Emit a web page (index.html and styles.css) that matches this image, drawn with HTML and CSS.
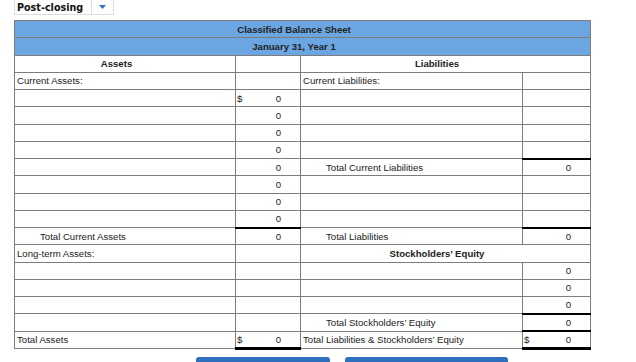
FILE: index.html
```html
<!DOCTYPE html>
<html lang="en">
<head>
<meta charset="utf-8">
<title>Classified Balance Sheet</title>
<link rel="stylesheet" href="styles.css">
</head>
<body>
<div class="page">
  <div class="select">
    <span class="select-label">Post-closing</span>
    <span class="select-arrow"><svg width="7" height="4" viewBox="0 0 7 4"><path d="M0 0H7L3.5 4Z" fill="#2b73c6"/></svg></span>
  </div>
  <table class="sheet">
    <colgroup><col class="c1"><col class="c2"><col class="c3"><col class="c4"></colgroup>
    <tr class="title"><th colspan="4">Classified Balance Sheet</th></tr>
    <tr class="title"><th colspan="4">January 31, Year 1</th></tr>
    <tr><th class="sec">Assets</th><td></td><th class="sec" colspan="2">Liabilities</th></tr>
    <tr><td class="lbl">Current Assets:</td><td class="amt"></td><td class="lbl">Current Liabilities:</td><td class="amt"></td></tr>
    <tr><td class="lbl"></td><td class="amt"><span class="dollar">$</span>0</td><td class="lbl"></td><td class="amt"></td></tr>
    <tr><td class="lbl"></td><td class="amt">0</td><td class="lbl"></td><td class="amt"></td></tr>
    <tr><td class="lbl"></td><td class="amt">0</td><td class="lbl"></td><td class="amt"></td></tr>
    <tr><td class="lbl"></td><td class="amt">0</td><td class="lbl"></td><td class="amt"></td></tr>
    <tr><td class="lbl"></td><td class="amt">0</td><td class="lbl ind">Total Current Liabilities</td><td class="amt tot">0</td></tr>
    <tr><td class="lbl"></td><td class="amt">0</td><td class="lbl"></td><td class="amt"></td></tr>
    <tr><td class="lbl"></td><td class="amt">0</td><td class="lbl"></td><td class="amt"></td></tr>
    <tr><td class="lbl"></td><td class="amt">0</td><td class="lbl"></td><td class="amt"></td></tr>
    <tr><td class="lbl ind">Total Current Assets</td><td class="amt tot">0</td><td class="lbl ind">Total Liabilities</td><td class="amt tot">0</td></tr>
    <tr><td class="lbl">Long-term Assets:</td><td class="amt"></td><th class="sec" colspan="2">Stockholders’ Equity</th></tr>
    <tr><td class="lbl"></td><td class="amt"></td><td class="lbl"></td><td class="amt">0</td></tr>
    <tr><td class="lbl"></td><td class="amt"></td><td class="lbl"></td><td class="amt">0</td></tr>
    <tr><td class="lbl"></td><td class="amt"></td><td class="lbl"></td><td class="amt">0</td></tr>
    <tr><td class="lbl"></td><td class="amt"></td><td class="lbl ind">Total Stockholders’ Equity</td><td class="amt tot">0</td></tr>
    <tr><td class="lbl">Total Assets</td><td class="amt grand"><span class="dollar">$</span>0</td><td class="lbl">Total Liabilities &amp; Stockholders’ Equity</td><td class="amt tot grand"><span class="dollar">$</span>0</td></tr>
  </table>
  <div class="actions">
    <span class="btn btn-a"></span>
    <span class="btn btn-b"></span>
  </div>
</div>
</body>
</html>
```

FILE: styles.css
```css
* { box-sizing: border-box; }

body {
  margin: 0;
  font-family: "Liberation Sans", Arial, sans-serif;
  font-size: 9.6px;
  color: #222;
  background: #fff;
}

.page {
  padding-left: 14px;
}

.select {
  display: flex;
  width: 100px;
  height: 16px;
  margin-top: -1px;
  border: 1px solid #dcdcdc;
}

.select-label {
  display: flex;
  align-items: center;
  width: 77px;
  padding-left: 2px;
  border-right: 1px solid #dcdcdc;
  font-family: "DejaVu Sans", Verdana, sans-serif;
  font-weight: bold;
  font-size: 9.6px;
  color: #111;
}

.select-arrow {
  flex: 1;
  display: flex;
  align-items: center;
  justify-content: center;
}

.sheet {
  border-collapse: collapse;
  table-layout: fixed;
  width: 577px;
  margin-top: 5px;
}

.c1 { width: 221px; }
.c2 { width: 65px; }
.c3 { width: 222px; }
.c4 { width: 68px; }

.sheet th,
.sheet td {
  border: 1px solid #7d7d7d;
  height: 17.25px;
  padding: 0 2px;
  vertical-align: middle;
  white-space: nowrap;
  overflow: hidden;
}

.title th {
  background: #6ba6e2;
  font-weight: bold;
  text-align: center;
  padding-right: 19px;
}

.sheet .sec {
  font-weight: bold;
  text-align: center;
  padding-right: 19px;
}

.lbl { text-align: left; }

.sheet .ind { padding-left: 25px; }

.sheet .amt {
  text-align: right;
  padding-left: 1px;
  padding-right: 19px;
}

.dollar { float: left; }

.sheet .tot { border-top: 2px solid #000; }

.sheet .grand { border-bottom: 3px solid #000; }

.actions {
  display: flex;
  gap: 15px;
  margin-top: 7px;
  padding-left: 182px;
}

.btn {
  display: block;
  height: 12px;
  background: #2f6fbe;
  border-radius: 3px 3px 0 0;
}

.btn-a { width: 134px; }
.btn-b { width: 163px; }
```
